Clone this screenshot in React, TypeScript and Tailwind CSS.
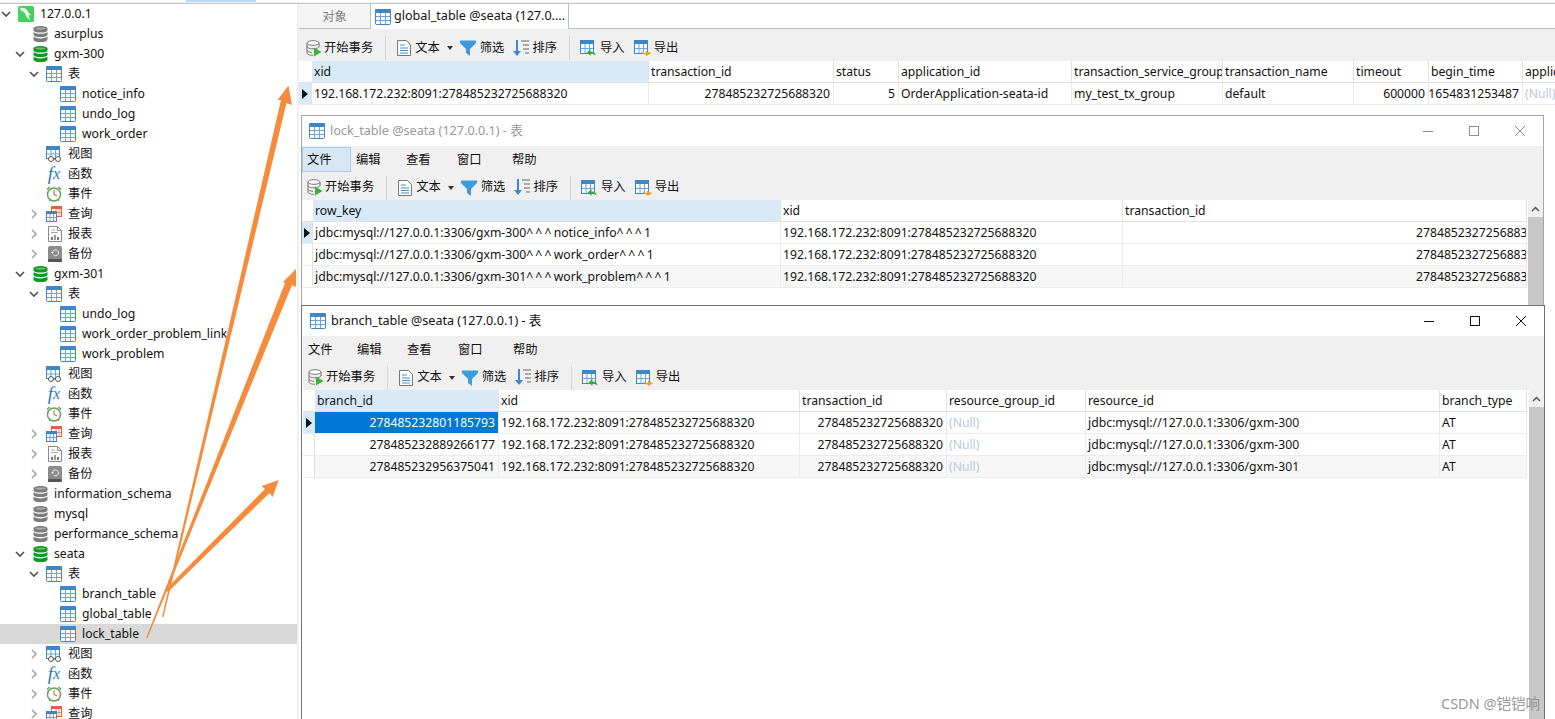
import { ReactNode } from 'react';

const LATIN = 'font-["Noto_Sans","Noto_Sans_CJK_SC",sans-serif]';

interface Column {
  name: string;
  width: string;
  right?: boolean;
  active?: boolean;
  indent?: string;
}

interface TreeItem {
  label: string;
  level: number;
  icon: string;
  chevron?: 'down' | 'right';
  selected?: boolean;
}

const TableIcon = () => (
  <svg width="16" height="16" viewBox="0 0 16 16" className="shrink-0">
    <rect x="0.5" y="0.5" width="15" height="15" rx="1" fill="#fff" stroke="#3f87c4" />
    <rect x="0" y="0" width="16" height="4" rx="1" fill="#3f87c4" />
    <path d="M5.5 4v11M10.5 4v11M1 7.5h14M1 11.5h14" stroke="#6aa5d6" fill="none" />
  </svg>
);

const DbIcon = ({ color }: { color: string }) => (
  <svg width="15" height="16" viewBox="0 0 15 16" className="shrink-0">
    <path d="M0.5 2.6C0.5 1 3.6 0 7.5 0s7 1 7 2.6v1.6c0 1.6-3.1 2.4-7 2.4s-7-.8-7-2.4z" fill={color} />
    <path d="M0.5 6c1 1.2 3.6 1.8 7 1.8s6-.6 7-1.8v2.8c0 1.5-3.1 2.3-7 2.3s-7-.8-7-2.3z" fill={color} />
    <path d="M0.5 10.6c1 1.2 3.6 1.8 7 1.8s6-.6 7-1.8v2.8c0 1.6-3.1 2.6-7 2.6s-7-1-7-2.6z" fill={color} />
    <ellipse cx="7.5" cy="2.6" rx="5" ry="1.1" fill="#fff" opacity="0.35" />
  </svg>
);

const MysqlIcon = () => (
  <svg width="16" height="16" viewBox="0 0 16 16" className="shrink-0">
    <rect width="16" height="16" rx="1.5" fill="#43d35a" />
    <path d="M2 2c3-.8 6 .4 7.5 3 1 1.6 2 3 4 4.2-1.300.2-2.300 0-3-.4.2 1.800.8 3.500 2 5.200-2.500-1.300-4.200-3.200-5-5.500C6.500 6 5 5 3.500 4.800 3 4.500 2.300 3 2 2z" fill="#fff" />
  </svg>
);

const ViewIcon = () => (
  <svg width="16" height="16" viewBox="0 0 16 16" className="shrink-0">
    <rect x="0.5" y="0.5" width="13" height="12" fill="#fff" stroke="#3f87c4" />
    <rect x="0" y="0" width="14" height="4" fill="#3f87c4" />
    <path d="M5 4v8M9.500 4v8M1 8h12" stroke="#6aa5d6" fill="none" />
    <circle cx="5" cy="13" r="2.500" fill="#fff" stroke="#555" />
    <circle cx="12" cy="13" r="2.500" fill="#fff" stroke="#555" />
    <path d="M7.500 13h2" stroke="#555" />
  </svg>
);

// fx is a real text glyph pair in the tree, not a drawing
const FxIcon = () => (
  <span className='flex h-4 w-4 shrink-0 items-end justify-center font-["Liberation_Serif",serif] italic leading-4 text-[#2f78b4]'>
    <span className="text-[19px] leading-4">f</span>
    <span className="text-[16px] leading-4">x</span>
  </span>
);

const ClockIcon = () => (
  <svg width="16" height="16" viewBox="0 0 16 16" className="shrink-0">
    <circle cx="8" cy="8.500" r="6.500" fill="#fff" stroke="#64a355" strokeWidth="1.500" />
    <path d="M1 3.500 3.500 1M15 3.500 12.500 1" stroke="#64a355" strokeWidth="1.500" />
    <path d="M8 4.500v4l3 1.500" stroke="#c0483a" fill="none" />
    <path d="M3 15l1.500-1.500M13 15l-1.500-1.500" stroke="#64a355" />
  </svg>
);

const QueryIcon = () => (
  <svg width="16" height="16" viewBox="0 0 16 16" className="shrink-0">
    <rect x="5.500" y="0.500" width="10" height="10" fill="#fff" stroke="#d9624a" />
    <rect x="5" y="0" width="11" height="3" fill="#d9624a" />
    <path d="M10 3v7M13 3v7M6 6.500h9" stroke="#e48e7c" />
    <rect x="0.500" y="5.500" width="10" height="10" fill="#fff" stroke="#3f87c4" />
    <rect x="0" y="5" width="11" height="3" fill="#3f87c4" />
    <path d="M4 8v7M7.500 8v7M1 11.500h9" stroke="#6aa5d6" />
  </svg>
);

const ReportIcon = () => (
  <svg width="14" height="16" viewBox="0 0 14 16" className="ml-[1px] shrink-0">
    <path d="M0.500 0.500h9l4 4v11h-13z" fill="#fff" stroke="#8a8a8a" />
    <path d="M9.500 0.500v4h4" fill="none" stroke="#8a8a8a" />
    <path d="M3 4h4M3 6.500h7" stroke="#aaa" />
    <rect x="3" y="11" width="2" height="3" fill="#3f87c4" />
    <rect x="6" y="9" width="2" height="5" fill="#e08a3c" />
    <rect x="9" y="11" width="2" height="3" fill="#3f87c4" />
  </svg>
);

const BackupIcon = () => (
  <svg width="14" height="16" viewBox="0 0 14 16" className="ml-[1px] shrink-0">
    <rect x="0" y="0" width="14" height="16" rx="2" fill="#8c8c8c" />
    <rect x="0" y="13" width="14" height="3" rx="1" fill="#555" />
    <path d="M4.500 6.500a3 3 0 1 1 1 2.600" stroke="#eee" fill="none" />
    <path d="M3 6h3L4.500 8z" fill="#eee" />
  </svg>
);

const treeIcon = (name: string): ReactNode => {
  switch (name) {
    case 'mysql': return <MysqlIcon />;
    case 'db': return <DbIcon color="#7c7c7c" />;
    case 'dbOpen': return <DbIcon color="#12981f" />;
    case 'table': return <TableIcon />;
    case 'view': return <ViewIcon />;
    case 'fx': return <FxIcon />;
    case 'clock': return <ClockIcon />;
    case 'query': return <QueryIcon />;
    case 'report': return <ReportIcon />;
    default: return <BackupIcon />;
  }
};

const objects = (down: boolean): TreeItem[] => [
  { label: '视图', level: 2, icon: 'view', chevron: down ? undefined : 'right' },
  { label: '函数', level: 2, icon: 'fx', chevron: down ? undefined : 'right' },
  { label: '事件', level: 2, icon: 'clock', chevron: down ? undefined : 'right' },
  { label: '查询', level: 2, icon: 'query', chevron: 'right' },
  { label: '报表', level: 2, icon: 'report', chevron: 'right' },
  { label: '备份', level: 2, icon: 'backup', chevron: 'right' },
];

const tree: TreeItem[] = [
  { label: '127.0.0.1', level: 0, icon: 'mysql', chevron: 'down' },
  { label: 'asurplus', level: 1, icon: 'db' },
  { label: 'gxm-300', level: 1, icon: 'dbOpen', chevron: 'down' },
  { label: '表', level: 2, icon: 'table', chevron: 'down' },
  { label: 'notice_info', level: 3, icon: 'table' },
  { label: 'undo_log', level: 3, icon: 'table' },
  { label: 'work_order', level: 3, icon: 'table' },
  ...objects(true),
  { label: 'gxm-301', level: 1, icon: 'dbOpen', chevron: 'down' },
  { label: '表', level: 2, icon: 'table', chevron: 'down' },
  { label: 'undo_log', level: 3, icon: 'table' },
  { label: 'work_order_problem_link', level: 3, icon: 'table' },
  { label: 'work_problem', level: 3, icon: 'table' },
  ...objects(true),
  { label: 'information_schema', level: 1, icon: 'db' },
  { label: 'mysql', level: 1, icon: 'db' },
  { label: 'performance_schema', level: 1, icon: 'db' },
  { label: 'seata', level: 1, icon: 'dbOpen', chevron: 'down' },
  { label: '表', level: 2, icon: 'table', chevron: 'down' },
  { label: 'branch_table', level: 3, icon: 'table' },
  { label: 'global_table', level: 3, icon: 'table' },
  { label: 'lock_table', level: 3, icon: 'table', selected: true },
  ...objects(false).slice(0, 4),
];

const levelPad = ['pl-0', 'pl-[14px]', 'pl-[28px]', 'pl-[42px]'];

const Chevron = ({ dir }: { dir: 'down' | 'right' }) => (
  <svg width="10" height="10" viewBox="0 0 10 10" className="ml-[1px]">
    {dir === 'down'
      ? <path d="M1 3l4 4 4-4" fill="none" stroke="#555" strokeWidth="1.700" />
      : <path d="M3 1l4 4-4 4" fill="none" stroke="#a8a8a8" strokeWidth="1.700" />}
  </svg>
);

const Sidebar = () => (
  <div className="h-full w-[297px] shrink-0 overflow-hidden bg-white">
    {tree.map((item, i) => (
      <div
        key={`${item.label}-${i}`}
        className={`flex h-5 items-center ${levelPad[item.level]} ${item.selected ? 'bg-[#d9d9d9]' : ''}`}
      >
        <div className="flex w-[18px] shrink-0 items-center">
          {item.chevron && <Chevron dir={item.chevron} />}
        </div>
        <div className="flex w-[16px] shrink-0 justify-center">{treeIcon(item.icon)}</div>
        <span className="ml-[6px] whitespace-nowrap text-[12.2px] text-[#111]">{item.label}</span>
      </div>
    ))}
  </div>
);

const ToolLabel = ({ children, className }: { children: ReactNode; className: string }) => (
  <span className={`whitespace-nowrap text-[12.3px] text-[#111] ${className}`}>{children}</span>
);

const Toolbar = ({ className }: { className: string }) => (
  <div className={`flex items-center bg-[#f0f0f0] ${className}`}>
    <svg width="16" height="17" viewBox="0 0 16 17" className="shrink-0">
      <ellipse cx="7" cy="3" rx="6" ry="2.300" fill="#fff" stroke="#777" />
      <path d="M1 3v10c0 1.300 2.500 2.300 6 2.300M13 3v4M1 6.500c0 1.300 2.500 2.300 6 2.300s6-1 6-2.300M1 10c0 1.300 2.500 2.300 5 2.300" fill="none" stroke="#777" />
      <path d="M8 7.500l7.500 4.500L8 16.500z" fill="#3fae3c" />
    </svg>
    <ToolLabel className="ml-[2px]">开始事务</ToolLabel>
    <div className="ml-[12px] h-[24px] w-px bg-[#d4d4d4]" />
    <svg width="14" height="16" viewBox="0 0 14 16" className="ml-[11px] shrink-0">
      <path d="M0.500 0.500h9l4 4v11h-13z" fill="#fff" stroke="#777" />
      <path d="M3 5h5M3 8h8M3 10.500h8M3 13h8" stroke="#3f93d6" />
    </svg>
    <ToolLabel className="ml-[4px]">文本</ToolLabel>
    <svg width="6" height="4" viewBox="0 0 6 4" className="ml-[7px] shrink-0">
      <path d="M0 0h6L3 4z" fill="#333" />
    </svg>
    <svg width="16" height="16" viewBox="0 0 16 16" className="ml-[7px] shrink-0">
      <path d="M0 0.500h16v2.500L10 9v7l-4-3V9L0 3z" fill="#3f9bdc" />
    </svg>
    <ToolLabel className="ml-[4px]">筛选</ToolLabel>
    <svg width="17" height="17" viewBox="0 0 17 17" className="ml-[8px] shrink-0">
      <path d="M5 0v14" stroke="#3f87d6" strokeWidth="2" />
      <path d="M1 11l4 5 4-5z" fill="#3f87d6" />
      <path d="M9 1h8M11 5h6M11 9h6M13 13h4" stroke="#666" />
    </svg>
    <ToolLabel className="ml-[3px]">排序</ToolLabel>
    <div className="ml-[12px] h-[24px] w-px bg-[#d4d4d4]" />
    <svg width="16" height="16" viewBox="0 0 16 16" className="ml-[10px] shrink-0">
      <rect x="0.500" y="0.500" width="13" height="13" fill="#fff" stroke="#3f87c4" />
      <rect x="0" y="0" width="14" height="4" fill="#3f87c4" />
      <path d="M5 4v9M9.500 4v9M1 8.500h12" stroke="#6aa5d6" />
      <path d="M15.500 15.500c0-3-2-4-5-4V9l-4 3.500 4 3.500v-2.300c2 0 3.500.6 5 1.800z" fill="#3fa84a" />
    </svg>
    <ToolLabel className="ml-[4px]">导入</ToolLabel>
    <svg width="17" height="16" viewBox="0 0 17 16" className="ml-[9px] shrink-0">
      <rect x="0.500" y="0.500" width="13" height="13" fill="#fff" stroke="#3f87c4" />
      <rect x="0" y="0" width="14" height="4" fill="#3f87c4" />
      <path d="M5 4v9M9.500 4v9M1 8.500h12" stroke="#6aa5d6" />
      <path d="M7 9c0 3 2 4 5 4v-2.500l5 3-5 2.500v-1.500c-3 0-5-1.500-5-5.500z" fill="#f09a28" />
    </svg>
    <ToolLabel className="ml-[3px]">导出</ToolLabel>
  </div>
);

const Null = () => <span className="text-[#bcc8de]">(Null)</span>;

// the carets in the original font are wider than in Noto Sans
const renderCell = (cell: string): ReactNode => {
  if (cell === '(Null)') return <Null />;
  if (!cell.includes('^^^')) return cell;
  const parts = cell.split('^^^');
  return parts.map((part, i) => (
    <span key={part}>
      {part}
      {i < parts.length - 1 && <span className="tracking-[2.2px]">^^^</span>}
    </span>
  ));
};

const DataTable = ({
  columns, rows, selected, headWidth,
}: {
  columns: Column[];
  rows: string[][];
  selected?: boolean;
  headWidth: string;
}) => (
  <div className="min-w-0 flex-1 overflow-hidden bg-white">
    <div className="flex h-[22px] w-max border-b border-[#e2e2e2]">
      <div className={`shrink-0 ${headWidth}`} />
      {columns.map((col) => (
        <div
          key={col.name}
          className={`flex shrink-0 items-center overflow-hidden whitespace-nowrap border-r border-[#e2e2e2] pl-[2px] pt-[2px] text-[12.2px] text-[#111] ${col.width} ${col.active ? 'bg-[#d8e9f7]' : ''}`}
        >
          {col.name}
        </div>
      ))}
    </div>
    {rows.map((row, r) => (
      <div
        key={row.join()}
        className={`flex h-[22px] w-max border-b border-[#ececec] ${r === 2 ? 'bg-[#f7f7f7]' : 'bg-white'}`}
      >
        <div className={`flex shrink-0 items-center justify-center ${headWidth} ${r === 0 ? 'bg-[#d8e9f7]' : 'bg-white'} border-r border-[#e2e2e2]`}>
          {r === 0 && (
            <svg width="6" height="10" viewBox="0 0 6 10"><path d="M0 0l6 5-6 5z" fill="#111" /></svg>
          )}
        </div>
        {row.map((cell, c) => {
          const col = columns[c];
          const isSelected = selected && r === 0 && c === 0;
          const align = col.right ? 'justify-end pr-[3px]' : col.indent ?? 'pl-[2px]';
          return (
            <div
              key={col.name}
              className={`flex shrink-0 items-center overflow-hidden whitespace-nowrap border-r border-[#ececec] pt-[2px] text-[12.2px] ${col.width} ${align} ${isSelected ? 'bg-[#0078d7] text-white' : 'text-[#111]'}`}
            >
              {renderCell(cell)}
            </div>
          );
        })}
      </div>
    ))}
  </div>
);

const Window = ({
  title, active, className, menuHighlight, children,
}: {
  title: string;
  active: boolean;
  className: string;
  menuHighlight?: boolean;
  children: ReactNode;
}) => {
  const ctrl = active ? '#111' : '#8f8f8f';
  return (
    <div className={`absolute flex flex-col border bg-white ${className}`}>
      <div className="flex h-[30px] shrink-0 items-center bg-white pl-[7px]">
        <TableIcon />
        <span className={`ml-[5px] whitespace-nowrap text-[12.6px] ${active ? 'text-[#111]' : 'text-[#999]'}`}>{title}</span>
        <div className="ml-auto flex items-center gap-[34px] pr-[17px]">
          <svg width="12" height="12" viewBox="0 0 12 12"><path d="M1 6.500h10" stroke={ctrl} /></svg>
          <svg width="12" height="12" viewBox="0 0 12 12"><rect x="1.500" y="1.500" width="9" height="9" fill="none" stroke={ctrl} /></svg>
          <svg width="12" height="12" viewBox="0 0 12 12"><path d="M1 1l10 10M11 1 1 11" stroke={ctrl} /></svg>
        </div>
      </div>
      <div className="flex h-[27px] shrink-0 items-center bg-[#f0f0f0] text-[12.3px] text-[#111]">
        <span className={`flex h-[25px] w-[49px] items-center border pl-[4px] ${menuHighlight ? 'border-[#a8cbe8] bg-[#d6e6f5]' : 'border-transparent'}`}>
          <span className="pt-[2px]">文件</span>
        </span>
        <span className="ml-[5px] w-[50px] pt-[2px]">编辑</span>
        <span className="w-[51px] pt-[2px]">查看</span>
        <span className="w-[55px] pt-[2px]">窗口</span>
        <span className="w-[50px] pt-[2px]">帮助</span>
      </div>
      <Toolbar className="h-[27px] shrink-0 pl-[5px] pt-[2px]" />
      {children}
    </div>
  );
};

const Scrollbar = () => (
  <div className="flex w-[15px] shrink-0 flex-col bg-[#f0f0f0]">
    <div className="flex h-[17px] items-center justify-center">
      <svg width="9" height="6" viewBox="0 0 9 6"><path d="M1 5l3.500-3.500L8 5" fill="none" stroke="#555" strokeWidth="1.500" /></svg>
    </div>
    <div className="flex-1 bg-[#c8c8c8]" />
  </div>
);

const globalCols: Column[] = [
  { name: 'xid', width: 'w-[337px]', active: true },
  { name: 'transaction_id', width: 'w-[185px]', right: true },
  { name: 'status', width: 'w-[65px]', right: true },
  { name: 'application_id', width: 'w-[173px]' },
  { name: 'transaction_service_group', width: 'w-[151px]' },
  { name: 'transaction_name', width: 'w-[131px]' },
  { name: 'timeout', width: 'w-[75px]', right: true },
  { name: 'begin_time', width: 'w-[94px]', right: true },
  { name: 'application_data', width: 'w-[120px]' },
];

const globalRows = [[
  '192.168.172.232:8091:278485232725688320', '278485232725688320', '5',
  'OrderApplication-seata-id', 'my_test_tx_group', 'default', '600000', '1654831253487', '(Null)',
]];

const lockCols: Column[] = [
  { name: 'row_key', width: 'w-[468px]', active: true },
  { name: 'xid', width: 'w-[342px]' },
  { name: 'transaction_id', width: 'w-[404px]', indent: 'pl-[293px]' },
];

const lockRows = [
  ['jdbc:mysql://127.0.0.1:3306/gxm-300^^^notice_info^^^1', '192.168.172.232:8091:278485232725688320', '278485232725688320'],
  ['jdbc:mysql://127.0.0.1:3306/gxm-300^^^work_order^^^1', '192.168.172.232:8091:278485232725688320', '278485232725688320'],
  ['jdbc:mysql://127.0.0.1:3306/gxm-301^^^work_problem^^^1', '192.168.172.232:8091:278485232725688320', '278485232725688320'],
];

const branchCols: Column[] = [
  { name: 'branch_id', width: 'w-[184px]', active: true, right: true },
  { name: 'xid', width: 'w-[301px]' },
  { name: 'transaction_id', width: 'w-[147px]', right: true },
  { name: 'resource_group_id', width: 'w-[139px]' },
  { name: 'resource_id', width: 'w-[354px]' },
  { name: 'branch_type', width: 'w-[87px]' },
];

const branchRows = [
  ['278485232801185793', '192.168.172.232:8091:278485232725688320', '278485232725688320', '(Null)', 'jdbc:mysql://127.0.0.1:3306/gxm-300', 'AT'],
  ['278485232889266177', '192.168.172.232:8091:278485232725688320', '278485232725688320', '(Null)', 'jdbc:mysql://127.0.0.1:3306/gxm-300', 'AT'],
  ['278485232956375041', '192.168.172.232:8091:278485232725688320', '278485232725688320', '(Null)', 'jdbc:mysql://127.0.0.1:3306/gxm-301', 'AT'],
];

const Arrows = () => (
  <svg width="1555" height="719" viewBox="0 0 1555 719" className="pointer-events-none absolute left-0 top-0">
    <g fill="#f68b3c">
      <polygon points="162,617 281,100 277.500,100 288.500,85.500 292,105 286.500,103 163.500,617" />
      <polygon points="146,638 285,283 283,282 296,269 296,287 292,285 147.500,638" />
      <polygon points="165,590 265,489 261.700,486 278.700,480 272.700,497 269.500,493 168,592" />
    </g>
  </svg>
);

export default function App() {
  return (
    <div className={`relative h-[719px] w-[1555px] overflow-hidden bg-white ${LATIN}`}>
      <div className="relative h-[3px] border-b border-[#f0f0f0] bg-white">
        <div className="absolute left-[186px] top-0 h-[2px] w-[70px] bg-[#b9d9f2]" />
      </div>
      <div className="h-px bg-[#c4c4c4]" />
      <div className="flex h-[715px]">
        <Sidebar />
        <div className="w-[2px] shrink-0 bg-[#f0f0f0]" />
        <div className="flex min-w-0 flex-1 flex-col">
          <div className="flex h-[25px] shrink-0 border-b border-[#bdbdbd]">
            <div className="flex w-[71px] items-center justify-center bg-[#f5f5f5] pt-[2px] text-[12.3px] text-[#808080]">对象</div>
            <div className="-mb-px flex w-[199px] items-center border-x border-[#bdbdbd] bg-white pl-[4px]">
              <TableIcon />
              <span className="ml-[3px] whitespace-nowrap text-[12.6px] text-[#111]">global_table @seata (127.0....</span>
            </div>
          </div>
          <Toolbar className="h-[32px] shrink-0 pl-[7px] pt-[6px]" />
          <DataTable columns={globalCols} rows={globalRows} headWidth="w-[13px]" />
        </div>
      </div>

      <Window
        title="lock_table @seata (127.0.0.1) - 表"
        active={false}
        menuHighlight
        className="left-[301px] top-[115px] h-[240px] w-[1243px] border-[#a6a6a6]"
      >
        <div className="flex min-h-0 flex-1">
          <DataTable columns={lockCols} rows={lockRows} headWidth="w-[11px]" />
          <Scrollbar />
        </div>
      </Window>

      <Window
        title="branch_table @seata (127.0.0.1) - 表"
        active
        className="left-[301px] top-[305px] h-[420px] w-[1244px] border-[#707070] pl-[1px]"
      >
        <div className="flex min-h-0 flex-1">
          <DataTable columns={branchCols} rows={branchRows} selected headWidth="w-[12px]" />
          <Scrollbar />
        </div>
      </Window>

      <Arrows />
      <span className="absolute left-[1441px] top-[693px] whitespace-nowrap text-[14.5px] text-[#8a8a8a]/90">CSDN @铠铠响</span>
    </div>
  );
}
